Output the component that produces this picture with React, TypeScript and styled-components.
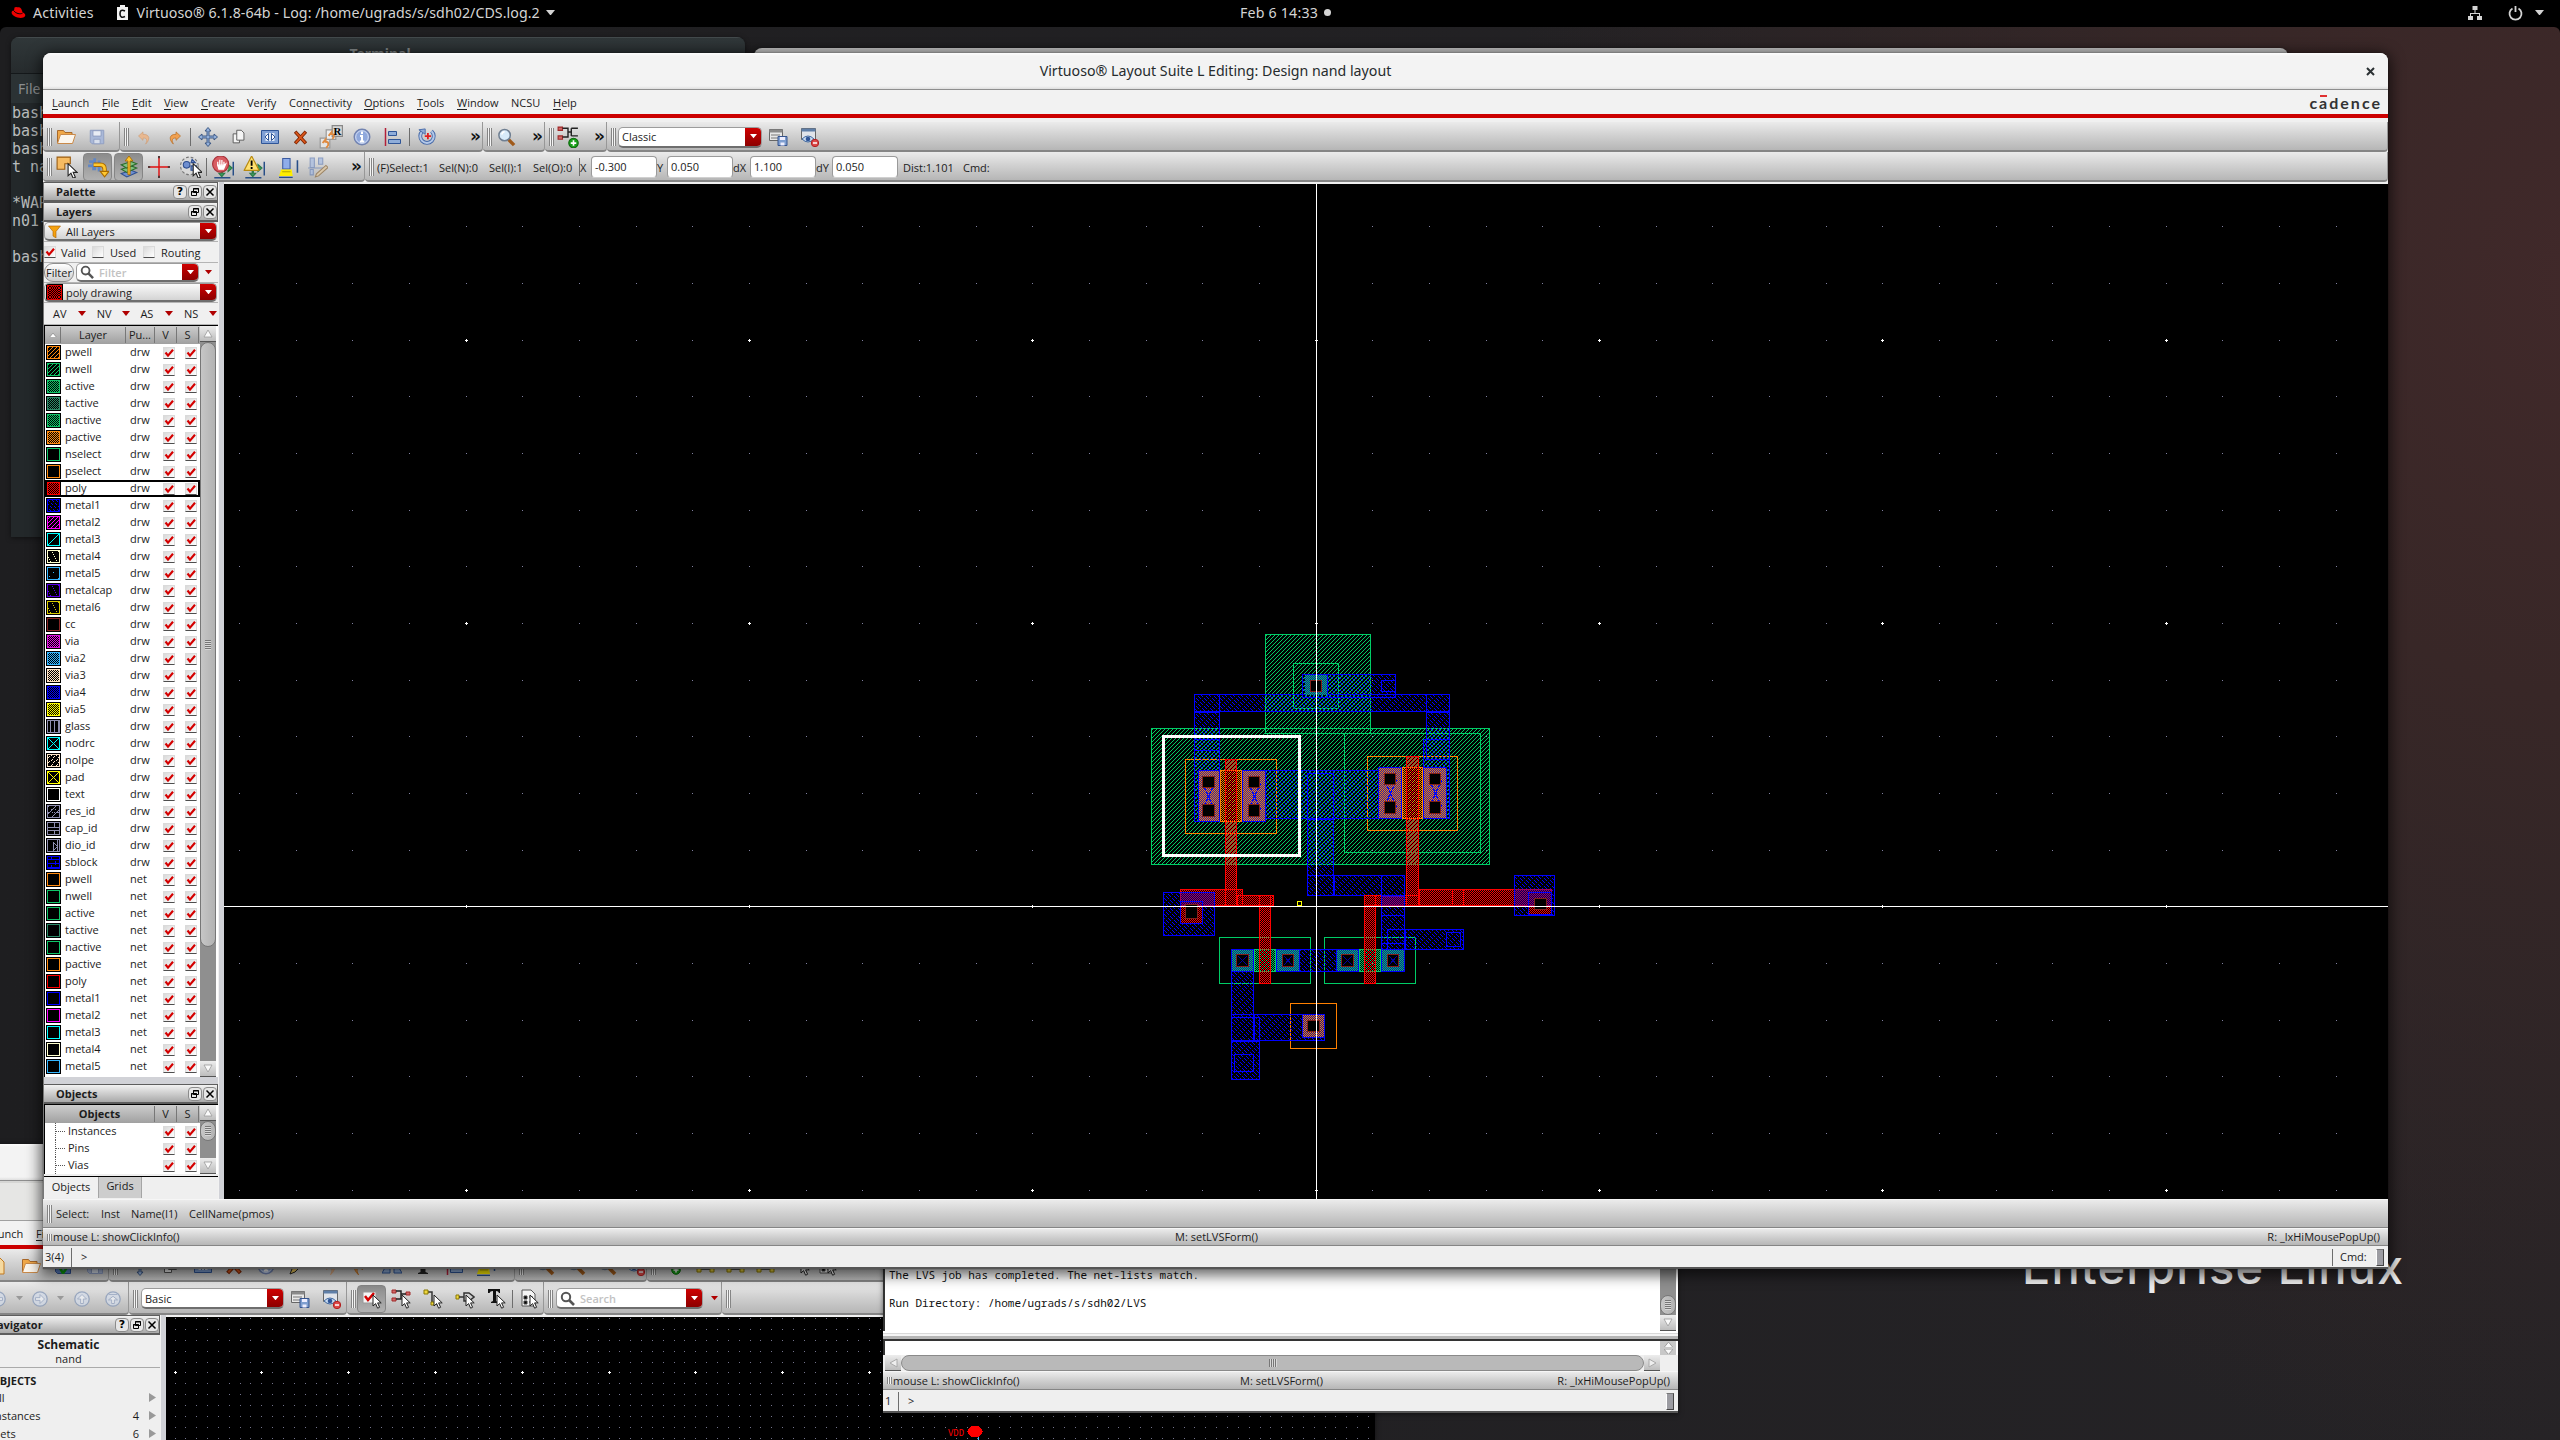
import React from "react";
import styled, { createGlobalStyle, css } from "styled-components";

const UI = `"Open Sans", "Noto Sans", sans-serif`;

const Global = createGlobalStyle`
  html, body { margin: 0; padding: 0; background: #000; }
  * { box-sizing: border-box; }
  body { font-family: ${UI}; font-size: 11px; color: #1c1c1c; overflow: hidden; }
  svg { display: block; flex: none; }
`;

const barFill = "linear-gradient(#ebebeb, #d2d2d2 45%, #b6b6b6)";

/* ---------- desktop ---------- */
const Desktop = styled.div`
  position: relative;
  width: 2560px;
  height: 1440px;
  overflow: hidden;
  background: #000;
`;
const Wallpaper = styled.div`
  position: absolute;
  inset: 27px 0 0 0;
  border-radius: 6px 6px 0 0;
  background: radial-gradient(1100px 1200px at 2600px 250px, #41292a 0%, #382727 35%, rgba(40, 36, 38, 0) 100%),
    linear-gradient(90deg, #1e1e20, #252326);
`;
const Brand = styled.div`
  position: absolute;
  left: 2022px;
  top: 1237px;
  font: 500 47px/60px Inter, "Open Sans", sans-serif;
  letter-spacing: 1.1px;
  color: #ececec;
  white-space: nowrap;
`;
const TopBar = styled.header`
  position: absolute;
  inset: 0 0 auto 0;
  height: 27px;
  display: flex;
  align-items: center;
  padding: 0 16px 2px 11px;
  background: #000;
  color: #d4d4d4;
  font: 14.2px/25px "Noto Sans", sans-serif;
  white-space: nowrap;
`;
const TopItem = styled.span<{ $ml?: number; $ls?: number }>`
  margin-left: ${(p) => p.$ml ?? 0}px;
  letter-spacing: ${(p) => p.$ls ?? 0}px;
`;
const Grow = styled.div`
  flex: 1;
`;
const Clock = styled.div`
  position: absolute;
  left: 1240px;
  top: 0;
  display: flex;
  align-items: center;
  gap: 4px;
`;
const ClockDot = styled.i`
  width: 7px;
  height: 7px;
  margin-left: 2px;
  border-radius: 50%;
  background: #d4d4d4;
`;

/* ---------- windows ---------- */
const Win = styled.section<{ $x: number; $y: number; $w: number; $h: number; $bg?: string; $r?: number; $deep?: boolean }>`
  position: absolute;
  left: ${(p) => p.$x}px;
  top: ${(p) => p.$y}px;
  width: ${(p) => p.$w}px;
  height: ${(p) => p.$h}px;
  display: flex;
  flex-direction: column;
  background: ${(p) => p.$bg ?? "#efefef"};
  border-radius: ${(p) => p.$r ?? 8}px ${(p) => p.$r ?? 8}px 0 0;
  overflow: hidden;
  box-shadow: ${(p) => (p.$deep ? "0 3px 14px 3px rgba(0,0,0,.62), 0 0 1px #000" : "0 1px 5px rgba(0,0,0,.5)")};
`;
const TermTitle = styled.div`
  height: 37px;
  background: linear-gradient(#303739, #262b2d);
  border-top: 1px solid #434a4c;
  border-bottom: 1px solid #14181a;
  color: #868b8c;
  font: bold 14px/32px "Noto Sans", sans-serif;
  display: flex;
  justify-content: center;
  padding-left: 4px;
`;
const TermMenu = styled.div`
  height: 29px;
  background: #2b3234;
  color: #8b8f90;
  font: 14px/29px "Noto Sans", sans-serif;
  padding-left: 7px;
`;
const TermBody = styled.pre`
  margin: 0;
  flex: 1;
  background: #23282a;
  color: #b9bcbc;
  font: 15px/18px "DejaVu Sans Mono", monospace;
  padding: 1px 0 0 1px;
`;
const TitleBar = styled.div`
  position: relative;
  flex: none;
  height: 37px;
  background: linear-gradient(#fdfdfd, #f3f3f3 3px, #f3f3f3 33px, #dedede 36px);
  border-bottom: 1px solid #8e8e8e;
  display: flex;
  align-items: center;
  justify-content: center;
  font: 14.2px/20px "Noto Sans", sans-serif;
  padding-bottom: 0;
  color: #262b2d;
`;
const TitleClose = styled.span`
  position: absolute;
  right: 13px;
  top: 14px;
`;
const MenuBar = styled.nav<{ $pl: number }>`
  flex: none;
  height: 28px;
  padding: 1px 8px 0 ${(p) => p.$pl}px;
  background: #f2f2f2;
  border-bottom: 4px solid #cc0000;
  display: flex;
  align-items: center;
  white-space: nowrap;
`;
const MenuItem = styled.span<{ $w: number }>`
  width: ${(p) => p.$w}px;
  line-height: 14px;
  u {
    text-decoration: none;
    border-bottom: 1px solid #222;
    display: inline-block;
    height: 14px;
  }
`;
const Cadence = styled.span`
  position: relative;
  font: bold 16px/20px Lato, sans-serif;
  letter-spacing: 2px;
  color: #333;
  margin-right: -2px;
  &::after {
    content: "";
    position: absolute;
    left: 11px;
    top: 2px;
    width: 7px;
    height: 2px;
    background: #e03030;
  }
`;
const ToolRow = styled.div<{ $h: number }>`
  flex: none;
  display: flex;
  height: ${(p) => p.$h}px;
  align-items: stretch;
  white-space: nowrap;
`;
const Group = styled.div<{ $w?: number }>`
  ${(p) => (p.$w ? css`width: ${p.$w}px; flex: none;` : css`flex: 1;`)}
  display: flex;
  align-items: center;
  background: ${barFill};
  border-bottom: 2px solid #858585;
  border-right: 1px solid #979797;
  border-radius: 0 0 4px 4px;
  padding: 2px 0 0 4px;
  overflow: hidden;
`;
const Grip = styled.i<{ $h?: number; $mr?: number }>`
  flex: none;
  width: 5px;
  height: ${(p) => p.$h ?? 18}px;
  margin-right: ${(p) => p.$mr ?? 0}px;
  background: repeating-linear-gradient(90deg, #858585 0 1px, #f4f4f4 1px 2px);
`;
const Slot = styled.div<{ $w: number; $ml?: number }>`
  flex: none;
  width: ${(p) => p.$w}px;
  margin-left: ${(p) => p.$ml ?? 0}px;
  display: flex;
  align-items: center;
  justify-content: center;
`;
const Pressed = styled(Slot)`
  height: 28px;
  border-radius: 4px;
  border: 1px solid #858585;
  background: linear-gradient(#8c8c8c, #b2b2b2);
`;
const Rule = styled.i<{ $ml?: number; $h?: number }>`
  flex: none;
  width: 1px;
  height: ${(p) => p.$h ?? 18}px;
  margin-left: ${(p) => p.$ml ?? 0}px;
  background: #6d6d6d;
`;
const More = styled.b<{ $ml: number }>`
  font: bold 17px/18px "DejaVu Sans", sans-serif;
  color: #111;
  margin: -3px 0 0 ${(p) => p.$ml}px;
`;
const BarText = styled.span<{ $w?: number; $ml?: number }>`
  flex: none;
  ${(p) => p.$w && css`width: ${p.$w}px;`}
  margin-left: ${(p) => p.$ml ?? 0}px;
  white-space: nowrap;
`;
const Field = styled.span<{ $w: number }>`
  flex: none;
  width: ${(p) => p.$w}px;
  height: 22px;
  padding-left: 3px;
  background: #fff;
  border: 1px solid #9a9a9a;
  border-bottom-color: #d0d0d0;
  border-radius: 4px;
  font-size: 11px;
  line-height: 19px;
`;
const Combo = styled.div<{ $w: number; $h?: number; $ml?: number; $plain?: boolean }>`
  flex: none;
  width: ${(p) => p.$w}px;
  height: ${(p) => p.$h ?? 21}px;
  margin-left: ${(p) => p.$ml ?? 0}px;
  display: flex;
  align-items: center;
  border: 1px solid #9c9c9c;
  border-bottom: 2px solid #6e6e6e;
  border-radius: 5px;
  overflow: hidden;
  background: ${(p) => (p.$plain ? "#fff" : "linear-gradient(#fafafa,#d4d4d4)")};
`;
const ComboLabel = styled.span<{ $hint?: boolean }>`
  flex: 1;
  padding-left: 3px;
  color: ${(p) => (p.$hint ? "#c2c2c2" : "#1c1c1c")};
  font-weight: ${(p) => (p.$hint ? 600 : 400)};
`;
const ComboButton = styled.span`
  width: 16px;
  height: 100%;
  background: linear-gradient(#cf0000, #8c0000);
  display: flex;
  align-items: center;
  justify-content: center;
`;
const Body = styled.div`
  flex: 1;
  min-height: 0;
  display: flex;
`;

/* ---------- docks ---------- */
const Dock = styled.aside<{ $w: number }>`
  flex: none;
  width: ${(p) => p.$w}px;
  display: flex;
  flex-direction: column;
  background: #efefef;
  border-left: 1px solid #777;
`;
const Splitter = styled.i`
  flex: none;
  width: 6px;
  background: #d1d2d7;
  border-left: 1px solid #f2f2f2;
`;
const DockHead = styled.div`
  flex: none;
  height: 20px;
  border: 1px solid #5e5e5e;
  border-width: 1px 1px 2px 0;
  background: linear-gradient(#f2f2f2, #a9a9a9);
  display: flex;
  align-items: center;
  gap: 1px;
  padding-left: 12px;
  font-weight: bold;
`;
const HeadBtn = styled.span`
  width: 14px;
  height: 14px;
  border-radius: 4px;
  border: 1px solid #8b8b8b;
  background: #e6e6e6;
  display: flex;
  align-items: center;
  justify-content: center;
  font: bold 11px/12px "DejaVu Sans", sans-serif;
  color: #000;
`;
const DockRow = styled.div<{ $h: number; $pl?: number }>`
  flex: none;
  height: ${(p) => p.$h}px;
  display: flex;
  align-items: center;
  padding-left: ${(p) => p.$pl ?? 0}px;
  border-bottom: 1px solid #b4b4b4;
  background: #f0f0f0;
`;
const FilterBtn = styled.span`
  width: 30px;
  height: 19px;
  border: 1px solid #8e8e8e;
  border-radius: 9px;
  background: linear-gradient(#fff, #cfcfcf);
  text-align: center;
  line-height: 17px;
  margin-right: 2px;
`;
const TableWrap = styled.div<{ $h: number }>`
  flex: none;
  height: ${(p) => p.$h}px;
  display: flex;
  border-top: 1px solid #000;
  border-left: 1px solid #000;
  background: #fff;
`;
const Table = styled.div`
  width: 155px;
  overflow: hidden;
`;
const TableHead = styled.div`
  height: 18px;
  display: flex;
  align-items: center;
  background: linear-gradient(#cdcdcd, #a0a0a0);
  line-height: 18px;
`;
const HeadCell = styled.span<{ $w: number; $bold?: boolean }>`
  width: ${(p) => p.$w}px;
  height: 16px;
  line-height: 16px;
  text-align: center;
  border-right: 1px solid #777;
  font-weight: ${(p) => (p.$bold ? "bold" : "normal")};
  display: flex;
  align-items: center;
  justify-content: center;
`;
const Row = styled.div<{ $on?: boolean }>`
  height: 17px;
  display: flex;
  align-items: center;
  padding-left: 1px;
  line-height: 16px;
  ${(p) => p.$on && css`box-shadow: inset 0 0 0 2px #000;`}
`;
const Name = styled.span<{ $w: number; $ml: number }>`
  width: ${(p) => p.$w}px;
  margin-left: ${(p) => p.$ml}px;
  padding-bottom: 1px;
`;
const Box = styled.span<{ $mr?: number }>`
  flex: none;
  width: 12px;
  height: 12px;
  margin-right: ${(p) => p.$mr ?? 0}px;
  background: linear-gradient(135deg, #d9d9d9, #fff);
  border: 1px solid #dadada;
  border-bottom: 1px solid #4e4e4e;
`;
const ScrollV = styled.div<{ $h?: number }>`
  width: 16px;
  ${(p) => p.$h && css`height: ${p.$h}px;`}
  display: flex;
  flex-direction: column;
  background: #8f8f8f;
`;
const ScrollArrow = styled.span`
  flex: none;
  width: 16px;
  height: 16px;
  background: linear-gradient(#ededed, #bdbdbd);
  border-bottom: 1px solid #555;
  display: flex;
  align-items: center;
  justify-content: center;
`;
const Thumb = styled.span<{ $h: number }>`
  height: ${(p) => p.$h}px;
  border-radius: 8px;
  border: 1px solid #777;
  background: linear-gradient(90deg, #c6c6c6, #b2b2b2);
  display: flex;
  align-items: center;
  justify-content: center;
`;
const ThumbLines = styled.i<{ $v?: boolean }>`
  width: ${(p) => (p.$v ? 8 : 6)}px;
  height: ${(p) => (p.$v ? 8 : 10)}px;
  background: repeating-linear-gradient(${(p) => (p.$v ? "90deg" : "180deg")}, #777 0 1px, #d8d8d8 1px 2px);
`;
const Tabs = styled.div`
  height: 22px;
  display: flex;
  border-top: 1px solid #000;
  margin-top: 2px;
`;
const Tab = styled.span<{ $w: number; $on?: boolean }>`
  width: ${(p) => p.$w}px;
  text-align: center;
  line-height: ${(p) => (p.$on ? 20 : 18)}px;
  border-right: 1px solid #a5a5a5;
  background: ${(p) => (p.$on ? "#f0f0f0" : "#cdcdcd")};
`;
const StatusRow = styled.div<{ $h: number }>`
  flex: none;
  height: ${(p) => p.$h}px;
  background: ${barFill};
  border-top: 1px solid #f6f6f6;
  border-bottom: 1px solid #858585;
  display: flex;
  align-items: center;
  padding: 0 8px 0 4px;
  line-height: 14px;
  white-space: nowrap;
`;
const MouseText = styled.span<{ $a: "left" | "center" | "right" }>`
  flex: 1;
  text-align: ${(p) => p.$a};
`;
const CmdRow = styled.div`
  flex: none;
  height: 23px;
  display: flex;
  align-items: center;
  background: #efefef;
  border-bottom: 2px solid #555;
  line-height: 14px;
  padding: 1px 4px 0 2px;
`;
const SizeGrip = styled.i`
  flex: none;
  width: 8px;
  height: 17px;
  border: 1px solid #444;
  border-left-color: #fff;
  border-top-color: #777;
  background: #9c9ca2;
`;
const CanvasArea = styled.div`
  flex: 1;
  background: #000;
  border-top: 2px solid #f0f0f0;
  overflow: hidden;
`;

/* ---------- small drawings ---------- */
const Tri = ({ c = "#fff", w = 7, up = false, stroke }: { c?: string; w?: number; up?: boolean; stroke?: string }) => (
  <svg width={w} height={w * 0.62} viewBox="0 0 10 6">
    <path d={up ? "M5 0L10 6H0z" : "M0 0h10L5 6z"} fill={c} stroke={stroke} />
  </svg>
);
const ArrowBtn = ({ up = false }: { up?: boolean }) => (
  <ScrollArrow>
    <svg width="10" height="9" viewBox="0 0 10 9">
      <path d={up ? "M5 1L9 8H1z" : "M1 1h8L5 8z"} fill="#fafafa" stroke="#9a9a9a" strokeWidth=".8" />
    </svg>
  </ScrollArrow>
);
const Check = ({ on = true, mr }: { on?: boolean; mr?: number }) => (
  <Box $mr={mr}>
    {on && (
      <svg width="10" height="10" viewBox="0 0 10 10">
        <path d="M1.5 4.5L4 7.6L9 1.8" fill="none" stroke="#d40000" strokeWidth="2.2" />
      </svg>
    )}
  </Box>
);
const Restore = () => (
  <HeadBtn>
    <svg width="10" height="10" viewBox="0 0 10 10" fill="#e6e6e6" stroke="#000">
      <path d="M3.5 1.5h5v4h-5zM3 2h6M1.5 4.5h5v4h-5zM1 5h6" />
    </svg>
  </HeadBtn>
);
const Close = () => (
  <HeadBtn>
    <svg width="10" height="10" viewBox="0 0 10 10" stroke="#000" strokeWidth="1.5">
      <path d="M1.5 1.5l7 7M8.5 1.5l-7 7" />
    </svg>
  </HeadBtn>
);
const Lens = ({ s = 15 }: { s?: number }) => (
  <svg width={s} height={s} viewBox="0 0 15 15" fill="none" stroke="#555">
    <circle cx="6" cy="6" r="4.2" strokeWidth="2" />
    <path d="M9 9l5 5" strokeWidth="2.6" />
  </svg>
);

const pointer = "M0 0v11l2.6-2.4 2 4.6 2-.9-2-4.4h3.6z";
const icons: Record<string, React.ReactNode> = {
  open: (
    <g stroke="#a8682a">
      <path d="M1.5 16V3.5h6l1.500 2h7V9" fill="#f0a848" />
      <path d="M1.500 16.500l3-9h15l-3 9z" fill="#fbf6ee" stroke="#c98a4a" />
    </g>
  ),
  save: (
    <g stroke="#8d9cc0">
      <path d="M2.500 2.500h15v15h-13l-2-2z" fill="#a9b8d8" />
      <path d="M5.500 3h9v6h-9z" fill="#e9edf5" />
      <path d="M6.500 12.500h7v5h-7z" fill="#d8dfec" />
    </g>
  ),
  savegreen: (
    <g>
      <path d="M2.500 2.500h15v15h-13l-2-2z" fill="#5b7fc0" stroke="#2f4f90" />
      <path d="M6 13h3l1 2 4-5 2 1-5 7H9z" fill="#0a9a0a" />
    </g>
  ),
  newdoc: <path d="M6 2h8l4 4v12H6z" fill="#f5d9a0" stroke="#c07820" />,
  undo: <path d="M2 8l6-5.500v3.300c9-.5 10 7 3.500 13 2.500-5 2-8.300-3.500-8v3z" fill="#e8b890" stroke="#cf9a70" strokeWidth=".8" />,
  redo: <path d="M18 8l-6-5.500v3.300c-9-.5-10 7-3.500 13-2.500-5-2-8.300 3.500-8v3z" fill="#f0a050" stroke="#b86a20" strokeWidth=".9" />,
  move: (
    <path
      d="M10 .5l3 3.500h-2v5h5V7l3.500 3-3.500 3v-2h-5v5h2l-3 3.500-3-3.500h2v-5H4v2L.5 10 4 7v2h5V4H7z"
      fill="#93b0da"
      stroke="#33507f"
      strokeWidth=".9"
    />
  ),
  copy: (
    <g fill="#f4f4f4" stroke="#555">
      <path d="M3.500 6.500h7v10h-7z" />
      <path d="M7.500 2.500h5l3 3v8h-8z" />
    </g>
  ),
  stretch: (
    <g stroke="#2f5597">
      <path d="M1.500 3.500h17v13h-17z" fill="#7f9fd4" />
      <path d="M5.500 6h9v8h-9z" fill="#dfe8f5" stroke="none" />
      <path d="M8.500 6.500L5 10l3.500 3.500zM11.500 6.500L15 10l-3.500 3.500z" fill="#fff" />
    </g>
  ),
  del: (
    <g strokeLinecap="square">
      <path d="M5 4.500l10 11M15 4.500l-10 11" stroke="#7c2400" strokeWidth="4" />
      <path d="M5 4.500l10 11M15 4.500l-10 11" stroke="#d8551a" strokeWidth="2" />
    </g>
  ),
  repl: (
    <g>
      <path d="M1 11h8v8H1z" fill="#e4e4e4" stroke="#999" />
      <path d="M6 4h8v8H6z" fill="#eee" stroke="#999" />
      <path d="M11 .500h8.500v9H11z" fill="#d8d8d8" stroke="#888" />
      <path d="M3 15l2.500-3v2c3 0 3 3 .5 5M8 9l2.500-3v1.500c2.500 0 2.500 2.500.5 4" fill="none" stroke="#e08a40" strokeWidth="1.600" />
      <text x="12" y="8.500" fontSize="9" fontWeight="bold" fontFamily="Liberation Serif, serif">R</text>
    </g>
  ),
  info: (
    <g>
      <circle cx="10" cy="10" r="7.800" fill="#8fa8dc" stroke="#7283b0" strokeWidth="1.400" />
      <circle cx="10" cy="10" r="6.300" fill="none" stroke="#d4def4" />
      <path d="M10 4.500v2.500M8 9h2v5.500M7.800 14.500h4.500" stroke="#fff" strokeWidth="2" fill="none" />
    </g>
  ),
  align: (
    <g fill="#8fadd9" stroke="#2f5597">
      <path d="M2.500 1v18" stroke="#b3203a" strokeWidth="1.500" />
      <path d="M5.500 4.500h8v4h-8zM5.500 12.500h12v4h-12z" />
    </g>
  ),
  rot: (
    <g fill="none">
      <path d="M5 3.500a7.500 7.500 0 1 0 10 0" stroke="#4468a8" strokeWidth="4.200" />
      <path d="M5 3.500a7.500 7.500 0 1 0 10 0" stroke="#b4c8e8" strokeWidth="2.200" />
      <path d="M1 2l7-1v6z" fill="#8fadd9" stroke="#4468a8" />
      <path d="M11 5.500v7M7.500 9h7" stroke="#e02020" strokeWidth="2" />
    </g>
  ),
  zoom: (
    <g>
      <path d="M12 12l6 6" stroke="#a05a1a" strokeWidth="3.600" />
      <circle cx="8" cy="7.500" r="6" fill="#d8ebfa" stroke="#6f7f92" strokeWidth="1.600" />
      <path d="M5 7a3.500 3.500 0 0 1 3-3" stroke="#fff" strokeWidth="1.500" fill="none" />
    </g>
  ),
  treeadd: (
    <g>
      <path d="M1 1h4v3H1zM1 9h4v3H1z" fill="#d06a6a" stroke="#a02828" />
      <path d="M5 2h5v8H5M10 5.500h3M13 2v7M13 2h6M13 9h6" stroke="#222" fill="none" strokeWidth="1.300" />
      <circle cx="15" cy="15.500" r="4.300" fill="#18a018" stroke="#0a6a0a" />
      <path d="M15 13v5M12.500 15.500h5" stroke="#fff" strokeWidth="1.500" />
    </g>
  ),
  viewsave: (
    <g>
      <path d="M1.500 2.500h13v11h-13z" fill="#e8e8e8" stroke="#666" />
      <path d="M1.500 2.500h13v3h-13z" fill="#8a8a8a" />
      <path d="M3 8h9M3 11h9" stroke="#777" />
      <path d="M10 9.500h9v9h-9z" fill="#7f9fd0" stroke="#37558f" />
      <path d="M12 10h5v3h-5zM12.500 15.500h4v3h-4z" fill="#eef" />
    </g>
  ),
  vieweye: (
    <g>
      <path d="M2.500 1.500h14v11h-14z" fill="#e0e4ea" stroke="#666" />
      <path d="M2.500 1.500h14v3h-14z" fill="#5f7fa8" />
      <path d="M3 12q6-6 12 0q-6 6-12 0z" fill="#c8dcf2" stroke="#4068a0" />
      <circle cx="9" cy="12" r="2.300" fill="#2f5597" />
      <circle cx="16" cy="16" r="3.700" fill="#dc4848" stroke="#b02020" />
      <path d="M14 16h4" stroke="#fff" strokeWidth="1.500" />
    </g>
  ),
  sel: (
    <g>
      <path d="M1 1h12v6h-5v5H1z" fill="#f6bb62" stroke="#9a5c10" />
      <path transform="translate(11 7)" d={pointer} fill="#fff" stroke="#222" />
    </g>
  ),
  path: (
    <g fill="none">
      <path d="M2 5h4v8M7 2v11M11 4v10M1 9h12" stroke="#5f86c6" strokeWidth="2.500" />
      <path d="M6 8h6q4 0 4 4v4" stroke="#a86a00" strokeWidth="4" />
      <path d="M6 8h6q4 0 4 4v3" stroke="#ffc830" strokeWidth="2.400" />
      <path d="M12 14h8l-4 5z" fill="#ffc830" stroke="#a86a00" />
    </g>
  ),
  layers: (
    <g>
      <path d="M3 16l9-3 5 2-9 4z" fill="#6f8fd0" stroke="#2f4f90" />
      <path d="M3 12l9-3 5 2-9 4z" fill="#7fc07f" stroke="#2a6a2a" />
      <path d="M3 8l9-3 5 2-9 4z" fill="#7fc07f" stroke="#2a6a2a" />
      <path d="M9 17V4.500H6.500L10 0l3.500 4.500H11V17z" fill="#ffc830" stroke="#a86a00" strokeWidth=".8" />
    </g>
  ),
  cross: (
    <g>
      <path d="M10 0v20M0 10h20" stroke="#e01010" strokeWidth="1.300" />
      <path d="M10 0v2M10 18v2M0 10h2M18 10h2" stroke="#333" strokeWidth="1.500" />
    </g>
  ),
  csel: (
    <g>
      <circle cx="8.500" cy="9" r="8" fill="#d9d9d9" stroke="#777" strokeDasharray="2.500 1.800" />
      <circle cx="6" cy="8" r="3" fill="#6f8fd0" stroke="#2f4f90" />
      <path d="M10 9h5v4h-5zM11 3l3 3h-4z" fill="#6f8fd0" stroke="#2f4f90" />
      <path transform="translate(12 7)" d={pointer} fill="#fff" stroke="#222" />
    </g>
  ),
  hand: (
    <g>
      <path d="M2 19h14M18.500 5v12" stroke="#274e87" strokeWidth="1.300" />
      <path d="M8 12v3H6l2.500 3 2.500-3H9v-3M14 9v-1.500l3.500 3-3.500 3V12" fill="#3d9a5d" stroke="#2b7a48" />
      <circle cx="7.500" cy="7" r="7" fill="#d85c62" stroke="#a8323a" />
      <path d="M5 9V5M6.800 8V3.200M8.600 8V3.500M10.400 9V5M5 8h5.400l1.500-1L10 11.500H6z" stroke="#fff" strokeWidth="1.100" fill="#fff" />
    </g>
  ),
  warn: (
    <g>
      <path d="M2 19h14M18.500 5v12" stroke="#274e87" strokeWidth="1.300" />
      <path d="M8 12v3H6l2.500 3 2.500-3H9v-3M13 9v-1.500l3.500 3-3.500 3V12" fill="#3d9a5d" stroke="#2b7a48" />
      <path d="M7.500 0L14 12.500H1z" fill="#ffe070" stroke="#b88a10" strokeLinejoin="round" />
      <path d="M7.500 4v4.500M7.500 9.500v1.700" stroke="#000" strokeWidth="1.600" />
    </g>
  ),
  hilite: (
    <g>
      <path d="M4.500 1.500h7v10h-7z" fill="#8fadea" stroke="#3b5ba0" />
      <path d="M3 12h10l1 6H1z" fill="#ffee00" />
      <path d="M4 14h8" stroke="#b8a800" />
      <path d="M1 19.500h13M18.500 3v12" stroke="#274e87" strokeWidth="1.500" />
    </g>
  ),
  pencil: (
    <g opacity=".75">
      <path d="M3 1h4v9H3zM11 1h4v6h-4zM3 12h3v5H3zM1 10.500h17" fill="#a9bde0" stroke="#7088b8" />
      <path d="M8 19l1-3 9-8 2 2-9 8z" fill="#e0c8a0" stroke="#8f7048" />
    </g>
  ),
  pencil2: <path d="M3 18l2-5L16 2l3 3L8 16z" fill="#f5d060" stroke="#222" />,
  mirror: (
    <g fill="#8fadd9" stroke="#2f5597">
      <path d="M8 3v14H0zM12 3v14h8z" />
    </g>
  ),
  bigT: <path d="M3 2h14v4h-1.500q-.5-2-3-2v12l2.500 1v1H5v-1l2.500-1V4q-3 0-3 2H3z" fill="#222" />,
  circ: (
    <g opacity=".7">
      <circle cx="10" cy="10" r="8" fill="#d3dcea" stroke="#7f93b5" strokeWidth="1.400" />
      <path d="M5 8.500h5V5l5 5-5 5v-3.500H5z" fill="#f2f5fa" stroke="#8a9cbd" />
    </g>
  ),
  circback: (
    <g opacity=".7" transform="rotate(180 10 10)">
      <circle cx="10" cy="10" r="8" fill="#d3dcea" stroke="#7f93b5" strokeWidth="1.400" />
      <path d="M5 8.500h5V5l5 5-5 5v-3.500H5z" fill="#f2f5fa" stroke="#8a9cbd" />
    </g>
  ),
  circup: (
    <g opacity=".7" transform="rotate(-90 10 10)">
      <circle cx="10" cy="10" r="8" fill="#d3dcea" stroke="#7f93b5" strokeWidth="1.400" />
      <path d="M5 8.500h5V5l5 5-5 5v-3.500H5z" fill="#f2f5fa" stroke="#8a9cbd" />
    </g>
  ),
  circtop: (
    <g opacity=".7" transform="rotate(-90 10 10)">
      <circle cx="10" cy="10" r="8" fill="#d3dcea" stroke="#7f93b5" strokeWidth="1.400" />
      <path d="M5 8.500h4V5l4 5-4 5v-3.500H5zM15 5v10" fill="#f2f5fa" stroke="#8a9cbd" />
    </g>
  ),
  selcheck: (
    <g>
      <path d="M1 3h13v11H1z" fill="#f4f4f4" stroke="#999" />
      <path d="M3 7l3 4 6-7" stroke="#d40000" strokeWidth="2.500" fill="none" />
      <path transform="translate(11 6)" d={pointer} fill="#fff" stroke="#222" />
    </g>
  ),
  selinst: (
    <g>
      <path d="M1 1h4v3H1zM1 9h4v3H1zM15 3h4v3h-4z" fill="#d06a6a" stroke="#a02828" />
      <path d="M5 2h5v8H5M10 5h5" stroke="#222" fill="none" strokeWidth="1.500" />
      <path transform="translate(11 6)" d={pointer} fill="#fff" stroke="#222" />
    </g>
  ),
  selwire: (
    <g>
      <path d="M3 3h6v12h6" stroke="#333" fill="none" strokeWidth="1.500" />
      <path d="M1 1h4v4H1zM8 13h4v3H8z" fill="#f0d840" stroke="#8a7800" />
      <path transform="translate(11 6)" d={pointer} fill="#fff" stroke="#222" />
    </g>
  ),
  selpin: (
    <g>
      <path d="M1 6h3v4H1z" fill="#f0d840" stroke="#8a7800" />
      <path d="M4 8h5M9 4h5l5 4-5 4H9z" stroke="#333" fill="none" strokeWidth="1.500" />
      <path transform="translate(11 6)" d={pointer} fill="#fff" stroke="#222" />
    </g>
  ),
  selT: (
    <g>
      <path d="M1 0h12v4h-1q-.500-2-3-2v10l2 1v1H4v-1l2-1V2Q3 2 2.500 4H1z" fill="#111" />
      <path transform="translate(10 6)" d={pointer} fill="#fff" stroke="#222" />
    </g>
  ),
  seldoc: (
    <g>
      <path d="M2 1h9l4 4v12H2z" fill="#f4f4f4" stroke="#555" />
      <path d="M4 7h3v3H4zM4 12h3v3H4zM9 8h4M9 13h4" stroke="#444" />
      <path transform="translate(10 6)" d={pointer} fill="#fff" stroke="#222" />
    </g>
  ),
  green: (
    <g>
      <circle cx="10" cy="14" r="4.300" fill="#18a018" stroke="#0a6a0a" />
      <path d="M10 11.500v5M7.500 14h5" stroke="#fff" strokeWidth="1.500" />
    </g>
  ),
  wire: (
    <g>
      <path d="M2 13h14M5 5v8" stroke="#333" strokeWidth="1.500" />
      <path d="M1 12h4v4H1zM14 12h4v4h-4z" fill="#f0d840" stroke="#8a7800" />
    </g>
  ),
};
const Icon = ({ n, s = 20 }: { n: string; s?: number }) => (
  <svg width={s} height={s} viewBox="0 0 20 20">
    {icons[n]}
  </svg>
);

/* ---------- layer table ---------- */
type Kind = "none" | "check" | "diag" | "back" | "dots" | "one" | "sparse" | "dotty" | "x" | "bars" | "brick" | "rand" | "res" | "cap" | "dio";
const fills: Record<Kind, (x: number, y: number) => boolean> = {
  none: () => false,
  check: (x, y) => (x + y) % 2 === 0,
  diag: (x, y) => (x + y) % 4 === 0,
  back: (x, y) => (x - y + 20) % 4 === 0 && y % 3 !== 2,
  dots: (x, y) => (x + y) % 4 === 1 && (x - y + 20) % 4 !== 0,
  one: (x, y) => x + y === 10,
  sparse: (x, y) => (x * 3 + y * 5) % 13 === 4,
  dotty: (x, y) => (x === 1 && y === 8) || (x === 5 && y === 4) || (x === 10 && y === 10),
  x: (x, y) => x === y || x + y === 10,
  bars: (x) => x % 4 === 2,
  brick: (x, y) => y % 4 === 2 || (x === 3 && y % 8 < 2) || (x === 7 && y % 8 > 3),
  rand: (x, y) => (x * 7 + y * 3 + x * y) % 5 === 1,
  res: (x, y) => [6, 6, 5, 3, 6, 9, 6, 3, 6, 6, 6][x] === y || (x + y) % 7 === 0,
  cap: (x, y) => y === 4 || y === 7 || (x === 6 && y < 4) || (x === 6 && y > 7),
  dio: (x, y) => x === 9 || (x === 5 && y > 1) || (x > 5 && Math.abs(y - 6) === 9 - x),
};
const Swatch = ({ c, k, s = 15 }: { c: string; k: Kind; s?: number }) => {
  let d = "";
  for (let y = 0; y < 11; y++) for (let x = 0; x < 11; x++) if (fills[k](x, y)) d += `M${x + 2} ${y + 2}h1v1h-1z`;
  return (
    <svg width={s} height={s} viewBox="0 0 15 15" shapeRendering="crispEdges">
      <rect width="15" height="15" fill="#000" />
      <rect x="1.500" y="1.500" width="12" height="12" fill="none" stroke={c} />
      <path d={d} fill={c} />
    </svg>
  );
};
const O = "#ff8a0f", G = "#0fc468", B = "#0000ff";
const drawing: [string, string, Kind][] = [
  ["pwell", O, "diag"], ["nwell", G, "diag"], ["active", G, "check"], ["tactive", "#2c8a68", "check"],
  ["nactive", G, "check"], ["pactive", O, "check"], ["nselect", G, "none"], ["pselect", O, "none"],
  ["poly", "#ff0000", "check"], ["metal1", B, "back"], ["metal2", "#ff00ff", "dots"], ["metal3", "#00ffff", "one"],
  ["metal4", "#ffffcc", "sparse"], ["metal5", "#33b5ff", "dotty"], ["metalcap", "#5a00e8", "sparse"],
  ["metal6", "#d9cc00", "sparse"], ["cc", "#8a2626", "none"], ["via", "#e010e0", "check"], ["via2", "#33b5ff", "check"],
  ["via3", "#ffe0c0", "check"], ["via4", B, "check"], ["via5", "#ffff00", "check"], ["glass", "#8f8fb0", "bars"],
  ["nodrc", "#00ffff", "x"], ["nolpe", "#ffe6c8", "rand"], ["pad", "#ffff00", "x"], ["text", "#ffffff", "none"],
  ["res_id", "#8f8fb0", "res"], ["cap_id", "#8f8fb0", "cap"], ["dio_id", "#8f8fb0", "dio"], ["sblock", B, "brick"],
];
const nets: [string, string][] = [
  ["pwell", O], ["nwell", G], ["active", G], ["tactive", "#2c8a68"], ["nactive", G], ["pactive", O],
  ["poly", "#ff0000"], ["metal1", B], ["metal2", "#ff00ff"], ["metal3", "#00ffff"], ["metal4", "#ffffcc"], ["metal5", "#33b5ff"],
];
const layerRows = [
  ...drawing.map(([n, c, k]) => ({ n, c, k, p: "drw" })),
  ...nets.map(([n, c]) => ({ n, c, k: "none" as Kind, p: "net" })),
];

/* ---------- canvases ---------- */
const plus = (x: number, y: number) => `M${x} ${y - 1}h1v3h-1zM${x - 1} ${y}h3v1h-3z`;
function gridPath(ox: number, oy: number, step: number, w: number, h: number, every: number) {
  let minor = "", major = "";
  for (let i = -Math.ceil(ox / step); ox + i * step < w; i++)
    for (let j = -Math.ceil(oy / step); oy + j * step < h; j++) {
      const x = ox + Math.floor(i * step), y = oy + Math.ceil(j * step);
      if (i % every === 0 && j % every === 0) major += plus(x, y);
      else minor += `M${x} ${y}h1v1h-1z`;
    }
  return { minor, major };
}
type R = [number, number, number, number];
const Shapes = ({ list, c, fill }: { list: R[]; c: string; fill?: string }) => (
  <g stroke={c} fill={fill ?? "none"}>
    {list.map(([a, b, x, y], i) => (
      <rect key={i} x={a + 0.5} y={b + 0.5} width={x - a - 1} height={y - b - 1} />
    ))}
  </g>
);
const nwell: R[] = [[135, 14, 241, 114], [21, 108, 360, 245]];
const nwellLines: R[] = [[214, 113, 351, 233], [163, 43, 209, 89]];
const metal: R[] = [
  [172, 54, 266, 78], [64, 74, 320, 92], [64, 92, 90, 202], [296, 92, 320, 140], [293, 119, 320, 199],
  [112, 150, 272, 199], [177, 199, 204, 276], [204, 255, 275, 276], [251, 276, 275, 352], [275, 309, 334, 330],
  [33, 272, 85, 316], [384, 255, 425, 296], [101, 329, 124, 421], [124, 394, 195, 421], [101, 421, 130, 460], [146, 329, 229, 352],
];
const metalLines: R[] = [
  [172, 54, 198, 78], [251, 60, 266, 72], [64, 74, 90, 131], [64, 119, 90, 202], [296, 74, 320, 140], [177, 153, 204, 276],
  [177, 255, 275, 276], [251, 255, 275, 296], [251, 295, 275, 324], [257, 309, 334, 330], [316, 312, 331, 327],
  [101, 394, 195, 421], [101, 397, 130, 460], [104, 434, 124, 452], [251, 323, 275, 352],
];
const poly: R[] = [
  [95, 139, 107, 286], [50, 269, 113, 286], [107, 275, 144, 286], [129, 286, 141, 364], [234, 286, 246, 364],
  [234, 275, 289, 286], [276, 136, 289, 286], [289, 269, 422, 286], [50, 286, 73, 304], [398, 286, 422, 295],
];
const polyLines: R[] = [[129, 275, 141, 364], [234, 275, 246, 364], [322, 269, 334, 286]];
const pCuts: R[] = [
  [72, 156, 85, 168], [72, 184, 85, 197], [118, 156, 130, 168], [118, 184, 130, 197],
  [254, 153, 266, 165], [254, 181, 266, 194], [299, 153, 311, 165], [299, 181, 311, 194],
];
const nCuts: R[] = [[106, 334, 119, 347], [152, 334, 164, 347], [211, 334, 224, 347], [257, 334, 269, 347]];
const loneCuts: R[] = [[55, 284, 68, 299], [404, 278, 417, 290], [177, 400, 190, 412], [180, 60, 192, 72]];
const pCols: R[] = [[68, 150, 90, 202], [112, 150, 136, 202], [248, 147, 272, 199], [293, 147, 317, 199]];

const px = (pts: [number, number][]) => pts.map(([x, y]) => `M${x} ${y}h1v1h-1z`).join("");

/* broken "\" hatch: every fourth diagonal, one pixel in four left out, staggered */
const metalHatch: [number, number][] = [];
for (let y = 0; y < 8; y++)
  for (let x = 0; x < 8; x++) if ((x - y + 8) % 4 === 0 && (x + y) % 8 !== 6) metalHatch.push([x, y]);

const LayoutCanvas = () => {
  const g = gridPath(1092, 722, 170 / 3, 2164, 1015, 5);
  return (
    <svg width="2164" height="1015" shapeRendering="crispEdges">
      <defs>
        <pattern id="hGreen" width="4" height="4" patternUnits="userSpaceOnUse">
          <path d={px([[3, 0], [2, 1], [1, 2], [0, 3]])} fill="#00cc66" />
        </pattern>
        <pattern id="hBlue" width="8" height="8" patternUnits="userSpaceOnUse">
          <path d={px(metalHatch)} fill="#0000ff" />
        </pattern>
        <pattern id="cRed" width="2" height="2" patternUnits="userSpaceOnUse">
          <path d={px([[0, 0], [1, 1]])} fill="#ff0000" />
        </pattern>
        <pattern id="cOrange" width="2" height="2" patternUnits="userSpaceOnUse">
          <path d={px([[0, 0], [1, 1]])} fill="#ff8000" />
        </pattern>
        <pattern id="cGreen" width="2" height="2" patternUnits="userSpaceOnUse">
          <path d={px([[0, 0], [1, 1]])} fill="#00cc66" />
        </pattern>
        <pattern id="sOrange" width="4" height="4" patternUnits="userSpaceOnUse">
          <path d={px([[0, 0], [2, 2], [3, 1]])} fill="#ff8000" />
        </pattern>
        <pattern id="sGreen" width="4" height="4" patternUnits="userSpaceOnUse">
          <path d={px([[0, 0], [2, 2]])} fill="#00cc66" />
        </pattern>
      </defs>
      <path d={g.minor} fill="#8080a0" />
      <path d={g.major} fill="#ffffff" />
      <g transform="translate(906 436)">
        <Shapes list={nwell} c="#00cc66" fill="url(#hGreen)" />
        <Shapes list={nwellLines} c="#00cc66" />
        <Shapes list={[[89, 317, 181, 364], [194, 317, 286, 364]]} c="#00cc66" />
        <Shapes list={[[55, 139, 147, 214], [237, 136, 328, 211], [160, 383, 207, 429]]} c="#ff8000" />
        <Shapes list={metal} c="#0000ff" fill="url(#hBlue)" />
        <Shapes list={metalLines} c="#0000ff" />
        <g fill="#1010a0">
          <rect x="101" y="329" width="23" height="23" />
          <rect x="146" y="329" width="24" height="23" />
          <rect x="206" y="329" width="23" height="23" />
          <rect x="251" y="329" width="24" height="23" />
          <rect x="175" y="55" width="22" height="20" />
          <rect x="173" y="395" width="21" height="22" />
        </g>
        <g fill="#2020b8">
          {pCols.map(([a, b, x, y]) => (
            <rect key={a} x={a} y={b} width={x - a} height={y - b} />
          ))}
        </g>
        <g fill="#000">
          <rect x="90" y="150" width="22" height="52" />
          <rect x="272" y="147" width="21" height="52" />
        </g>
        <g fill="url(#cGreen)">
          <rect x="101" y="329" width="69" height="23" />
          <rect x="206" y="329" width="69" height="23" />
          <rect x="175" y="55" width="22" height="20" />
        </g>
        <g fill="url(#cOrange)">
          <rect x="68" y="150" width="68" height="52" />
          <rect x="248" y="147" width="69" height="52" />
          <rect x="173" y="395" width="21" height="22" />
        </g>
        <Shapes list={[[90, 150, 112, 202], [272, 147, 293, 199]]} c="#ff8000" />
        <Shapes list={[[124, 329, 146, 352], [229, 329, 251, 352]]} c="#00cc66" />
        <Shapes list={poly} c="#ff0000" fill="url(#cRed)" />
        <Shapes list={polyLines} c="#ff0000" />
        <g fill="url(#sOrange)">
          <rect x="96" y="151" width="10" height="50" />
          <rect x="277" y="148" width="11" height="50" />
        </g>
        <g fill="url(#sGreen)">
          <rect x="130" y="330" width="10" height="21" />
          <rect x="235" y="330" width="10" height="21" />
        </g>
        <Shapes list={pCols} c="#0000ff" />
        <Shapes list={[[101, 329, 124, 352], [146, 329, 170, 352], [206, 329, 229, 352], [251, 329, 275, 352], [172, 394, 195, 418]]} c="#0000ff" />
        <Shapes list={[[50, 281, 73, 304], [398, 272, 422, 295], [33, 272, 85, 316], [384, 255, 425, 296], [251, 275, 275, 296]]} c="#0000ff" />
        <g fill="#0000ff" opacity=".35">
          <rect x="50" y="272" width="35" height="14" />
          <rect x="384" y="269" width="38" height="17" />
          <rect x="251" y="276" width="24" height="10" />
        </g>
        <g stroke="#0000ff" fill="none">
          <path d="M72 163L85 190M85 163L72 190M118 163L131 190M131 163L118 190M254 160L267 187M267 160L254 187M299 160L312 187M312 160L299 187" />
        </g>
        <Shapes list={[...pCuts, ...nCuts, ...loneCuts]} c="#80201c" fill="#000" />
        <g stroke="#0000a8">
          {nCuts.map(([a, b, x, y]) => (
            <path key={a} d={`M${a + 2} ${b + 2}L${x - 2} ${y - 2}M${x - 2} ${b + 2}L${a + 2} ${y - 2}`} />
          ))}
        </g>
        <rect x="167.500" y="281.500" width="4" height="4" fill="none" stroke="#ffff00" />
        <rect x="33.500" y="116.500" width="136" height="119" fill="none" stroke="#fff" strokeWidth="3" />
      </g>
      <path d="M1092 0h1v1015h-1zM0 722h2164v1H0z" fill="#fff" />
    </svg>
  );
};
const SchematicCanvas = () => {
  const g = gridPath(9, 55, 10.85, 1209, 123, 8);
  return (
    <svg width="1209" height="123" shapeRendering="crispEdges">
      <path d={g.minor} fill="#74748c" />
      <path d={g.major} fill="#fff" />
      <path d="M805 109h8l4 5.500-4 5.500h-8l-4-5.500z" fill="#f00" />
      <path d="M812 120h1v3h-1z" fill="#33b5ff" />
      <text x="782" y="119" fontSize="11" fontFamily="Liberation Mono, monospace" textLength="16" lengthAdjust="spacingAndGlyphs" fill="#f00">
        VDD
      </text>
    </svg>
  );
};

/* ---------- main ---------- */
const menus: [string, string, string, number][] = [
  ["", "L", "aunch", 50], ["", "F", "ile", 30], ["", "E", "dit", 32], ["", "V", "iew", 37], ["", "C", "reate", 46], ["Ver", "i", "fy", 42],
  ["Co", "n", "nectivity", 75], ["", "O", "ptions", 53], ["", "T", "ools", 40], ["", "W", "indow", 54], ["NCSU", "", "", 42], ["", "H", "elp", 40],
];

const Caret = () => (
  <ComboButton>
    <Tri />
  </ComboButton>
);

export default function App() {
  return (
    <Desktop>
      <Global />
      <Wallpaper />
      <Brand>Enterprise Linux</Brand>

      <TopBar>
        <svg width="15" height="13" viewBox="0 0 15 13">
          <path d="M3.500 1.500C5 .2 6.500 1.500 8 1.200c1.500-.2 3 2.500 3.500 5 2 .8 3.500 2.300 2.500 4-1.800 2.500-7 2-10.500 0C.5 8.500 0 6.500 1 5.200c.6-.6 1.300-.5 2-.4z" fill="#ee0000" />
          <path d="M3 5c2 2.500 6 3.500 8.500 2.200" stroke="#000" fill="none" />
        </svg>
        <TopItem $ml={7} $ls={0.15}>Activities</TopItem>
        <TopItem $ml={22}>
          <svg width="13" height="15" viewBox="0 0 13 15">
            <path d="M1 2h11v13H1zM4 0h5v3H4z" fill="#f2f2f2" />
            <path d="M9 6c-4-2-5 0-5 3s2 4 5 2.500" stroke="#111" strokeWidth="1.600" fill="none" />
          </svg>
        </TopItem>
        <TopItem $ml={8} $ls={0.06}>Virtuoso® 6.1.8-64b - Log: /home/ugrads/s/sdh02/CDS.log.2</TopItem>
        <TopItem $ml={6}><Tri c="#d4d4d4" w={9} /></TopItem>
        <Grow />
        <svg width="16" height="16" viewBox="0 0 16 16" fill="#d4d4d4">
          <path d="M5.500 1h5v4h-5zM1 11h5v4H1zM10 11h5v4h-5zM7.500 5h1v3h4.500v3h-1V9H4v2H3V8h4.500z" />
        </svg>
        <TopItem $ml={25}>
          <svg width="15" height="16" viewBox="0 0 15 16" fill="none" stroke="#d4d4d4" strokeWidth="1.800">
            <path d="M4.500 3.500a6 6 0 1 0 6 0M7.500 1v6" />
          </svg>
        </TopItem>
        <TopItem $ml={12}><Tri c="#d4d4d4" w={9} /></TopItem>
        <Clock>
          <TopItem $ls={0.2}>Feb 6 14:33</TopItem>
          <ClockDot />
        </Clock>
      </TopBar>

      <Win $x={11} $y={37} $w={734} $h={500} $bg="#23282a">
        <TermTitle>Terminal</TermTitle>
        <TermMenu>File</TermMenu>
        <TermBody>{"bash\nbash\nbash\nt na\n\n*WAR\nn01-\n\nbash"}</TermBody>
      </Win>
      <Win $x={754} $y={48} $w={1534} $h={40} $bg="#c4c4c4">{null}</Win>

      <Win $x={-30} $y={1144} $w={1405} $h={296} $r={0}>
        <TitleBar />
        <SchematicBand />
        <MenuBar $pl={16}>
          <MenuItem $w={50}><u>L</u>aunch</MenuItem>
          <MenuItem $w={30}><u>F</u>ile</MenuItem>
        </MenuBar>
        <ToolRow $h={33}>
          <Group $w={139}>
            <Slot $w={20} $ml={12}><Icon n="newdoc" /></Slot>
            <Slot $w={20} $ml={15}><Icon n="open" /></Slot>
            <Slot $w={20} $ml={12}><Icon n="savegreen" /></Slot>
            <Slot $w={20} $ml={12}><Icon n="save" /></Slot>
          </Group>
          <Group $w={406}>
            <Grip />
            {["move", "copy", "stretch", "del", "info", "pencil2", "undo", "redo", "mirror", "bigT", "align", "hilite"].map((n) => (
              <Slot key={n} $w={20} $ml={11.500}><Icon n={n} /></Slot>
            ))}
          </Group>
          <Group $w={132}>
            <Grip />
            {["a", "b", "c"].map((n) => (
              <Slot key={n} $w={20} $ml={11}><Icon n="zoom" /></Slot>
            ))}
            <Slot $w={20} $ml={8}><Icon n="vieweye" /></Slot>
          </Group>
          <Group>
            <Grip />
            <Slot $w={20} $ml={10}><Icon n="green" /></Slot>
            {["a", "b", "c"].map((n) => (
              <Slot key={n} $w={20} $ml={10}><Icon n="wire" /></Slot>
            ))}
            <Slot $w={20} $ml={14}><Icon n="selpin" /></Slot>
            <Slot $w={20} $ml={8}><Icon n="seldoc" /></Slot>
          </Group>
        </ToolRow>
        <ToolRow $h={33}>
          <Group $w={159}>
            <Slot $w={20} $ml={14}><Icon n="circback" s={18} /></Slot>
            <Slot $w={12} $ml={5}><Tri c="#999" /></Slot>
            <Slot $w={20} $ml={5}><Icon n="circ" s={18} /></Slot>
            <Slot $w={12} $ml={4}><Tri c="#999" /></Slot>
            <Slot $w={20} $ml={6}><Icon n="circup" s={18} /></Slot>
            <Slot $w={20} $ml={11}><Icon n="circtop" s={18} /></Slot>
          </Group>
          <Group $w={218}>
            <Grip $mr={3} />
            <Combo $w={143} $plain><ComboLabel>Basic</ComboLabel><Caret /></Combo>
            <Slot $w={20} $ml={6}><Icon n="viewsave" /></Slot>
            <Slot $w={20} $ml={11}><Icon n="vieweye" /></Slot>
          </Group>
          <Group $w={197}>
            <Grip />
            <Pressed $w={29} $ml={1}><Icon n="selcheck" /></Pressed>
            <Slot $w={22} $ml={4}><Icon n="selinst" /></Slot>
            <Slot $w={22} $ml={10}><Icon n="selwire" /></Slot>
            <Slot $w={22} $ml={10}><Icon n="selpin" /></Slot>
            <Slot $w={22} $ml={10}><Icon n="selT" /></Slot>
            <Rule $ml={4} />
            <Slot $w={22} $ml={6}><Icon n="seldoc" /></Slot>
          </Group>
          <Group $w={178}>
            <Grip $mr={3} />
            <Combo $w={147} $plain>
              <Slot $w={20}><Lens /></Slot>
              <ComboLabel $hint>Search</ComboLabel>
              <Caret />
            </Combo>
            <Slot $w={10} $ml={6}><Tri c="#b00000" /></Slot>
          </Group>
          <Group><Grip /></Group>
        </ToolRow>
        <Body>
          <Dock $w={190}>
            <DockHead>
              <NavTitle>Navigator</NavTitle>
              <Grow />
              <HeadBtn>?</HeadBtn><Restore /><Close />
            </DockHead>
            <NavHead>
              <b>Schematic</b>
              <span>nand</span>
            </NavHead>
            <NavRow $bold $h={24}>OBJECTS</NavRow>
            <NavRow $h={11}>All<Grow /><Play /></NavRow>
            <NavRow $h={24}>Instances<Grow /><NavNum>4</NavNum><Play /></NavRow>
            <NavRow $h={12}>Nets<Grow /><NavNum>6</NavNum><Play /></NavRow>
          </Dock>
          <Splitter />
          <CanvasArea><SchematicCanvas /></CanvasArea>
        </Body>
      </Win>

      <Win $x={883} $y={1200} $w={795} $h={213} $r={0}>
        <LogRow>
          <LogText>{"The LVS job has completed. The net-lists match.\n\nRun Directory: /home/ugrads/s/sdh02/LVS"}</LogText>
          <ScrollV $h={131}>
            <Grow />
            <Thumb $h={20}><ThumbLines /></Thumb>
            <ArrowBtn />
          </ScrollV>
        </LogRow>
        <LogSplit />
        <LogInput>
          <Grow />
          <Spin><Tri up c="#fafafa" w={9} stroke="#999" /><Tri c="#fafafa" w={9} stroke="#999" /></Spin>
        </LogInput>
        <HScroll>
          <ScrollArrow><svg width="9" height="10"><path d="M8 1v8L1 5z" fill="#eee" stroke="#aaa" /></svg></ScrollArrow>
          <HThumb><ThumbLines $v /></HThumb>
          <ScrollArrow><svg width="9" height="10"><path d="M1 1v8l7-4z" fill="#eee" stroke="#aaa" /></svg></ScrollArrow>
        </HScroll>
        <StatusRow $h={19}>
          <Grip $h={7} $mr={1} />
          <MouseText $a="left">mouse L: showClickInfo()</MouseText>
          <MouseText $a="center">M: setLVSForm()</MouseText>
          <MouseText $a="right">R: _lxHiMousePopUp()</MouseText>
        </StatusRow>
        <CmdRow>
          <BarText $w={13}>1</BarText>
          <Rule $h={19} />
          <BarText $ml={9}>&gt;</BarText>
          <Grow />
          <SizeGrip />
        </CmdRow>
      </Win>

      <Win $x={43} $y={53} $w={2345} $h={1216} $deep>
        <TitleBar>
          Virtuoso® Layout Suite L Editing: Design nand layout
          <TitleClose>
            <svg width="9" height="9" viewBox="0 0 9 9" stroke="#2b3133" strokeWidth="2"><path d="M1 1l7 7M8 1l-7 7" /></svg>
          </TitleClose>
        </TitleBar>
        <MenuBar $pl={9}>
          {menus.map(([a, u, b, w]) => (
            <MenuItem key={a + u + b} $w={w}>{a}{u && <u>{u}</u>}{b}</MenuItem>
          ))}
          <Grow />
          <Cadence>cadence</Cadence>
        </MenuBar>
        <Gap />
        <ToolRow $h={30}>
          <Group $w={77}>
            <Grip />
            <Slot $w={20} $ml={4}><Icon n="open" /></Slot>
            <Slot $w={20} $ml={11}><Icon n="save" s={18} /></Slot>
          </Group>
          <Group $w={363}>
            <Grip />
            <Slot $w={20} $ml={5}><Icon n="undo" s={15} /></Slot>
            <Slot $w={20} $ml={10}><Icon n="redo" s={15} /></Slot>
            <Rule $ml={6} />
            <Slot $w={20} $ml={7}><Icon n="move" /></Slot>
            <Slot $w={20} $ml={11}><Icon n="copy" s={18} /></Slot>
            <Slot $w={20} $ml={11}><Icon n="stretch" /></Slot>
            <Slot $w={20} $ml={10}><Icon n="del" s={17} /></Slot>
            <Slot $w={24} $ml={9}><Icon n="repl" s={24} /></Slot>
            <Slot $w={20} $ml={9}><Icon n="info" /></Slot>
            <Slot $w={20} $ml={11}><Icon n="align" /></Slot>
            <Rule $ml={6} />
            <Slot $w={20} $ml={7}><Icon n="rot" s={18} /></Slot>
            <More $ml={33}>»</More>
          </Group>
          <Group $w={62}>
            <Grip />
            <Slot $w={20} $ml={4}><Icon n="zoom" s={19} /></Slot>
            <More $ml={16}>»</More>
          </Group>
          <Group $w={62}>
            <Grip />
            <Slot $w={22} $ml={3}><Icon n="treeadd" s={22} /></Slot>
            <More $ml={15}>»</More>
          </Group>
          <Group>
            <Grip $mr={2} />
            <Combo $w={144} $plain><ComboLabel>Classic</ComboLabel><Caret /></Combo>
            <Slot $w={20} $ml={6}><Icon n="viewsave" /></Slot>
            <Slot $w={20} $ml={11}><Icon n="vieweye" /></Slot>
          </Group>
        </ToolRow>
        <ToolRow $h={30}>
          <Group $w={322}>
            <Grip />
            <Slot $w={23} $ml={3}><Icon n="sel" s={22} /></Slot>
            <Pressed $w={29} $ml={5}><Icon n="path" s={22} /></Pressed>
            <Pressed $w={29} $ml={2}><Icon n="layers" s={22} /></Pressed>
            <Slot $w={22} $ml={5}><Icon n="cross" s={22} /></Slot>
            <Slot $w={23} $ml={9}><Icon n="csel" s={22} /></Slot>
            <Rule $ml={4} />
            <Slot $w={23} $ml={5}><Icon n="hand" s={23} /></Slot>
            <Slot $w={23} $ml={8}><Icon n="warn" s={23} /></Slot>
            <Slot $w={22} $ml={11}><Icon n="hilite" s={21} /></Slot>
            <Slot $w={21} $ml={8}><Icon n="pencil" s={21} /></Slot>
            <More $ml={23}>»</More>
          </Group>
          <Group>
            <Grip $mr={3} />
            <BarText $w={62}>(F)Select:1</BarText>
            <BarText $w={50}>Sel(N):0</BarText>
            <BarText $w={44}>Sel(I):1</BarText>
            <BarText $w={46}>Sel(O):0</BarText>
            <Rule />
            <BarText $w={11}>X</BarText><Field $w={66}>-0.300</Field>
            <BarText $w={10}>Y</BarText><Field $w={66}>0.050</Field>
            <BarText $w={17}>dX</BarText><Field $w={66}>1.100</Field>
            <BarText $w={16}>dY</BarText><Field $w={66}>0.050</Field>
            <BarText $w={60} $ml={5}>Dist:1.101</BarText>
            <BarText>Cmd:</BarText>
          </Group>
        </ToolRow>
        <Body>
          <Dock $w={175}>
            <DockHead>Palette<Grow /><HeadBtn>?</HeadBtn><Restore /><Close /></DockHead>
            <DockHead>Layers<Grow /><Restore /><Close /></DockHead>
            <DockRow $h={20}>
              <Combo $w={173} $h={19}>
                <Slot $w={18}>
                  <svg width="13" height="13" viewBox="0 0 13 13"><path d="M.5 1h12L8 6.500V13L5 11V6.500z" fill="#f5a210" stroke="#a86000" strokeWidth=".6" /></svg>
                </Slot>
                <ComboLabel>All Layers</ComboLabel>
                <Caret />
              </Combo>
            </DockRow>
            <DockRow $h={21}>
              <Check mr={5} /><BarText $w={31}>Valid</BarText>
              <Check on={false} mr={6} /><BarText $w={33}>Used</BarText>
              <Check on={false} mr={6} /><BarText>Routing</BarText>
            </DockRow>
            <DockRow $h={20}>
              <FilterBtn>Filter</FilterBtn>
              <Combo $w={123} $h={19} $plain>
                <Slot $w={18} $ml={1}><Lens s={14} /></Slot>
                <ComboLabel $hint>Filter</ComboLabel>
                <Caret />
              </Combo>
              <Slot $w={18}><Tri c="#b00000" /></Slot>
            </DockRow>
            <DockRow $h={20}>
              <Combo $w={173} $h={19}>
                <Slot $w={17} $ml={1}><Swatch c="#e00000" k="check" s={17} /></Slot>
                <ComboLabel>poly drawing</ComboLabel>
                <Caret />
              </Combo>
            </DockRow>
            <DockRow $h={22} $pl={9}>
              {["AV", "NV", "AS", "NS"].map((t, i) => (
                <React.Fragment key={t}>
                  <BarText $w={25} $ml={i ? 10.7 : 0}>{t}</BarText>
                  <Slot $w={8}><Tri c="#b00000" w={8} /></Slot>
                </React.Fragment>
              ))}
            </DockRow>
            <TableWrap $h={752}>
              <Table>
                <TableHead>
                  <HeadCell $w={16}><Tri up c="#fff" w={8} stroke="#888" /></HeadCell>
                  <HeadCell $w={65}>Layer</HeadCell>
                  <HeadCell $w={29}>Pu...</HeadCell>
                  <HeadCell $w={22}>V</HeadCell>
                  <HeadCell $w={22}>S</HeadCell>
                </TableHead>
                {layerRows.map((r, i) => (
                  <Row key={i} $on={i === 8}>
                    <Swatch c={r.c} k={r.k} />
                    <Name $ml={4} $w={65}>{r.n}</Name>
                    <Name $ml={0} $w={33}>{r.p}</Name>
                    <Check mr={10} />
                    <Check />
                  </Row>
                ))}
              </Table>
              <ScrollV>
                <ArrowBtn up />
                <Thumb $h={605}><ThumbLines /></Thumb>
                <Grow />
                <ArrowBtn />
              </ScrollV>
            </TableWrap>
            <DockGap />
            <DockHead>Objects<Grow /><Restore /><Close /></DockHead>
            <TableWrap $h={70}>
              <Table>
                <TableHead>
                  <HeadCell $w={110} $bold>Objects</HeadCell>
                  <HeadCell $w={22}>V</HeadCell>
                  <HeadCell $w={22}>S</HeadCell>
                </TableHead>
                {["Instances", "Pins", "Vias"].map((n) => (
                  <Row key={n}>
                    <Branch />
                    <Name $ml={3} $w={95}>{n}</Name>
                    <Check mr={10} />
                    <Check />
                  </Row>
                ))}
              </Table>
              <ScrollV>
                <ArrowBtn up />
                <Thumb $h={20}><ThumbLines /></Thumb>
                <Grow />
                <ArrowBtn />
              </ScrollV>
            </TableWrap>
            <Tabs><Tab $w={55} $on>Objects</Tab><Tab $w={43}>Grids</Tab></Tabs>
          </Dock>
          <Splitter />
          <CanvasColumn><LayoutCanvas /></CanvasColumn>
        </Body>
        <StatusRow $h={29}>
          <Grip $mr={4} />
          <BarText $w={45}>Select:</BarText>
          <BarText $w={30}>Inst</BarText>
          <BarText $w={58}>Name(I1)</BarText>
          <BarText>CellName(pmos)</BarText>
        </StatusRow>
        <StatusRow $h={18}>
          <Grip $h={7} $mr={1} />
          <MouseText $a="left">mouse L: showClickInfo()</MouseText>
          <MouseText $a="center">M: setLVSForm()</MouseText>
          <MouseText $a="right">R: _lxHiMousePopUp()</MouseText>
        </StatusRow>
        <CmdRow>
          <BarText $w={26}>3(4)</BarText>
          <Rule $h={19} />
          <BarText $ml={9}>&gt;</BarText>
          <Grow />
          <Rule $h={17} />
          <BarText $ml={7} $w={36}>Cmd:</BarText>
          <SizeGrip />
        </CmdRow>
      </Win>
    </Desktop>
  );
}

const Gap = styled.div`
  flex: none;
  height: 4px;
  background: #f0f0f0;
`;
const DockGap = styled.div`
  flex: none;
  height: 7px;
  background: #d1d2d7;
`;
const CanvasColumn = styled.div`
  flex: 1;
  background: #000;
  border-top: 2px solid #f0f0f0;
  overflow: hidden;
`;
const Branch = styled.i`
  flex: none;
  width: 19px;
  height: 17px;
  background: linear-gradient(#fff, #fff) 0 0 / 9px 17px no-repeat,
    repeating-linear-gradient(90deg, #555 0 1px, #fff 1px 2px) 10px 8px / 9px 1px no-repeat,
    repeating-linear-gradient(180deg, #555 0 1px, #fff 1px 2px) 9px 0 / 1px 17px no-repeat;
`;
const SchematicBand = styled.div`
  flex: none;
  height: 40px;
  background: #e6e6e4;
  border-top: 2px solid #d6d6d4;
  border-bottom: 1px solid #a0a0a0;
`;
const NavTitle = styled.span`
  margin-left: 5px;
`;
const NavHead = styled.div`
  flex: none;
  height: 33px;
  padding-left: 6px;
  border-bottom: 1px solid #aaa;
  display: flex;
  flex-direction: column;
  align-items: center;
  line-height: 14px;
  padding-top: 3px;
  b {
    font-size: 12px;
  }
`;
const NavRow = styled.div<{ $h: number; $bold?: boolean }>`
  flex: none;
  height: ${(p) => p.$h}px;
  display: flex;
  align-items: center;
  padding: 0 4px 0 ${(p) => (p.$bold ? 20 : 21)}px;
  font-weight: ${(p) => (p.$bold ? "bold" : "normal")};
`;
const NavNum = styled.span`
  margin-right: 10px;
`;
const Play = () => (
  <svg width="7" height="9" viewBox="0 0 7 9">
    <path d="M0 0l7 4.500L0 9z" fill="#999" />
  </svg>
);
const LogRow = styled.div`
  flex: none;
  height: 131px;
  display: flex;
  background: #fff;
  border-left: 2px solid #333;
  padding-right: 2px;
`;
const LogText = styled.pre`
  margin: 0;
  flex: 1;
  padding: 68px 0 0 4px;
  font: 11px/14px "Noto Sans Mono", "DejaVu Sans Mono", monospace;
  color: #111;
`;
const LogSplit = styled.div`
  flex: none;
  height: 10px;
  background: linear-gradient(#fff 0 2px, #d9d9d9 2px 3px, #f4f4f4 3px 5px, #b5b5b5 5px 8px, #333 8px 10px);
`;
const LogInput = styled.div`
  flex: none;
  height: 14px;
  display: flex;
  background: #fff;
  border-left: 2px solid #333;
  padding-right: 2px;
`;
const Spin = styled.span`
  width: 16px;
  background: #c8c8c8;
  display: flex;
  flex-direction: column;
  align-items: center;
  justify-content: space-around;
`;
const HScroll = styled.div`
  flex: none;
  height: 16px;
  display: flex;
  background: #efefef;
  padding: 0 18px 0 2px;
`;
const HThumb = styled.span`
  flex: 1;
  border-radius: 8px;
  background: #b9b9b9;
  border: 1px solid #8a8a8a;
  display: flex;
  align-items: center;
  justify-content: center;
`;
